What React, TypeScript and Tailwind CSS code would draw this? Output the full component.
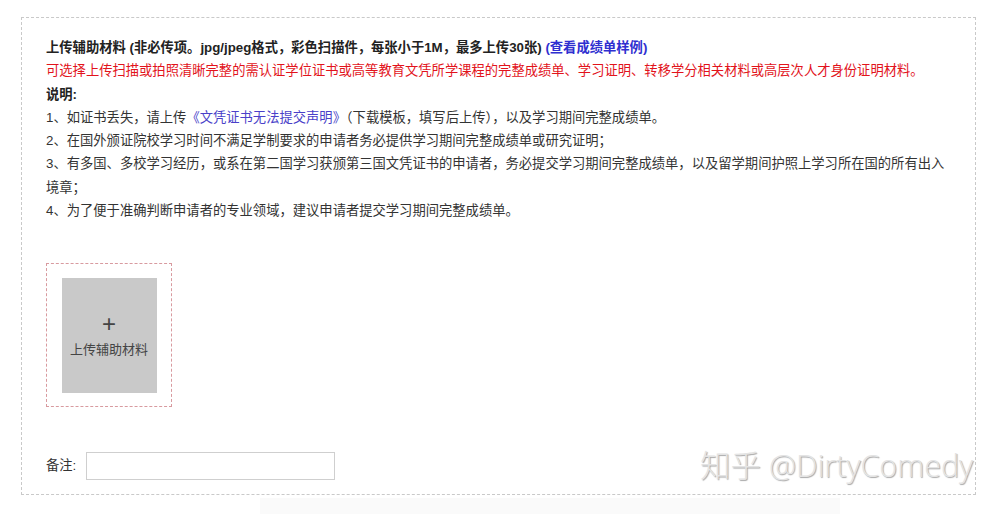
import React from "react";

const notes = [
  "2、在国外颁证院校学习时间不满足学制要求的申请者务必提供学习期间完整成绩单或研究证明；",
  "3、有多国、多校学习经历，或系在第二国学习获颁第三国文凭证书的申请者，务必提交学习期间完整成绩单，以及留学期间护照上学习所在国的所有出入境章；",
  "4、为了便于准确判断申请者的专业领域，建议申请者提交学习期间完整成绩单。",
];

export default function App() {
  return (
    <div className="relative min-h-[514px] w-[1000px] overflow-hidden bg-white font-['Liberation_Sans','Noto_Sans_CJK_SC',sans-serif] text-[#333]">
      <div className="ml-[21px] mt-[17px] w-[955px] border border-dashed border-[#c9c9c9] pb-[14px] pl-[24px] pr-[20px] pt-[18px]">
        <div className="text-[13.3px] leading-[23.3px]">
          <p className="font-bold text-[#222]">
            上传辅助材料 (非必传项。jpg/jpeg格式，彩色扫描件，每张小于1M，最多上传30张){" "}
            <a className="text-[#2f2fd0]">(查看成绩单样例)</a>
          </p>
          <p className="text-[#e2131b]">
            可选择上传扫描或拍照清晰完整的需认证学位证书或高等教育文凭所学课程的完整成绩单、学习证明、转移学分相关材料或高层次人才身份证明材料。
          </p>
          <p className="font-bold text-[#222]">说明:</p>
          <p>
            1、如证书丢失，请上传<a className="text-[#4a3fc9]">《文凭证书无法提交声明》</a>（下载模板，填写后上传），以及学习期间完整成绩单。
          </p>
          {notes.map((n) => (
            <p key={n}>{n}</p>
          ))}
        </div>

        <div className="mt-[41px] flex h-[144px] w-[126px] items-center justify-center border border-dashed border-[#d89a9f]">
          <div className="flex h-[115px] w-[95px] flex-col items-center justify-center bg-[#c9c9c9] text-[#444]">
            <span className="text-[24px] font-light leading-[24px]">+</span>
            <span className="mt-[5px] text-[13px] leading-[18px]">上传辅助材料</span>
          </div>
        </div>

        <div className="mt-[45px] flex items-center text-[13.3px]">
          <span className="text-[#333]">备注:</span>
          <input className="ml-[10px] h-[28px] w-[249px] border border-[#cfcfcf] outline-none" />
        </div>
      </div>

      <div className="ml-[260px] mt-[3px] h-[20px] w-[580px] bg-[#fafafa]" />

      <div className="absolute left-[700px] top-[444px] whitespace-nowrap font-['Open_Sans','Noto_Sans_CJK_SC',sans-serif] text-[30.5px] font-light leading-[42px] text-[#e4e4e4] [text-shadow:1px_1px_1px_rgba(0,0,0,0.35)]">
        知乎 @DirtyComedy
      </div>
    </div>
  );
}
